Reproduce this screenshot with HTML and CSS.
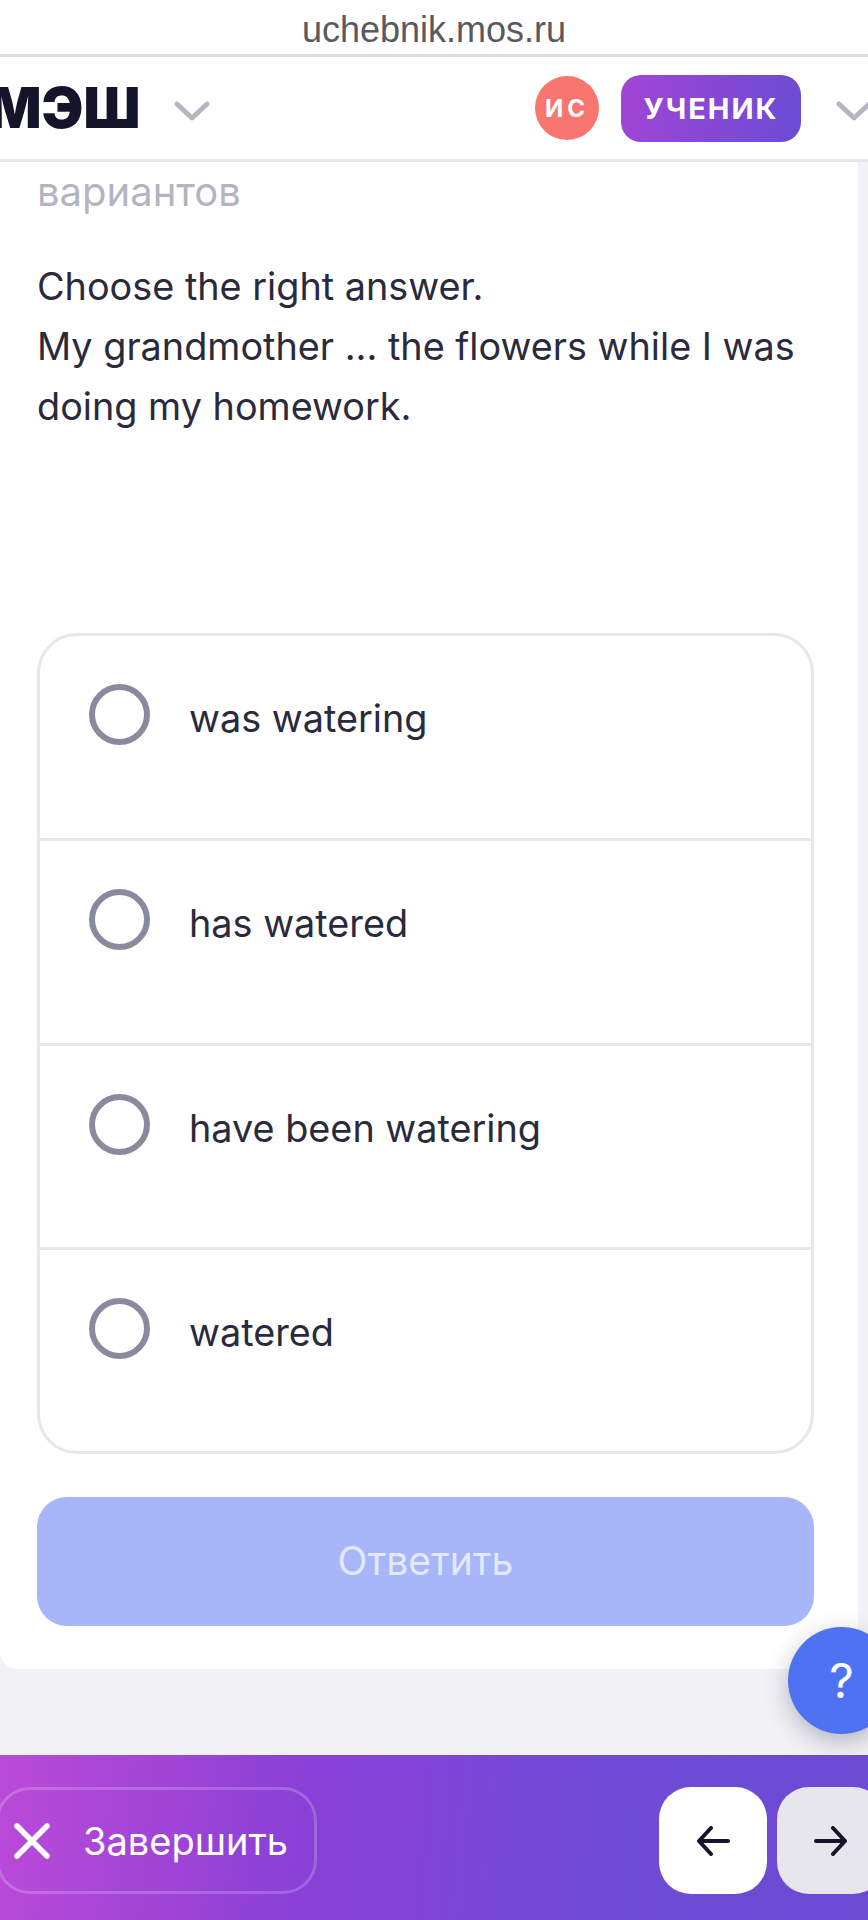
FILE: index.html
```html
<!DOCTYPE html>
<html lang="ru">
<head>
  <meta charset="UTF-8" />
  <meta name="viewport" content="width=device-width, initial-scale=1.0" />
  <title>МЭШ</title>
  <link rel="stylesheet" href="styles.css">
</head>
<body>
  <div class="urlbar">uchebnik.mos.ru</div>

  <header class="topbar">
    <span class="logo">МЭШ</span>
    <svg class="chevron chevron-logo" viewBox="0 0 36 20"><path d="M3 3 L18 17 L33 3" /></svg>
    <span class="avatar">ИС</span>
    <span class="role">УЧЕНИК</span>
    <svg class="chevron chevron-role" viewBox="0 0 36 20"><path d="M3 3 L18 17 L33 3" /></svg>
  </header>

  <main class="content">
    <section class="task">
      <p class="hint">вариантов</p>
      <p class="question">Choose the right answer.<br>My grandmother ... the flowers while I was doing my homework.</p>

      <div class="options">
        <label class="option"><span class="radio"></span><span class="option-text">was watering</span></label>
        <label class="option"><span class="radio"></span><span class="option-text">has watered</span></label>
        <label class="option"><span class="radio"></span><span class="option-text">have been watering</span></label>
        <label class="option"><span class="radio"></span><span class="option-text">watered</span></label>
      </div>

      <button class="submit">Ответить</button>
    </section>
    <button class="help">?</button>
  </main>

  <footer class="bottombar">
    <button class="finish">
      <svg class="finish-icon" viewBox="0 0 36 36"><path d="M3 3 L33 33 M33 3 L3 33" /></svg>
      Завершить
    </button>
    <button class="nav-btn nav-back">
      <svg viewBox="0 0 34 30"><path d="M32 15 H3 M15 2 L3 15 L15 28" /></svg>
    </button>
    <button class="nav-btn nav-next">
      <svg viewBox="0 0 34 30"><path d="M2 15 H31 M19 2 L31 15 L19 28" /></svg>
    </button>
  </footer>
</body>
</html>
```

FILE: styles.css
```css
* {
  box-sizing: border-box;
}

body {
  margin: 0;
  width: 868px;
  height: 1920px;
  display: flex;
  flex-direction: column;
  overflow: hidden;
  font-family: Inter, 'Noto Sans', sans-serif;
  background: #f2f2f6;
  color: #2a2a3c;
}

button {
  font-family: inherit;
  border: none;
}

.urlbar {
  height: 57px;
  padding-top: 9px;
  flex-shrink: 0;
  text-align: center;
  font-family: 'Liberation Sans', sans-serif;
  font-size: 36px;
  line-height: 42px;
  color: #59595e;
  background: #fff;
  border-bottom: 3px solid #dcdce0;
}

.topbar {
  height: 105px;
  flex-shrink: 0;
  display: flex;
  align-items: center;
  background: #fff;
  border-bottom: 3px solid #e6e6ec;
  position: relative;
  z-index: 2;
}

.logo {
  margin-left: -12px;
  width: 186px;
  font-size: 56px;
  font-weight: 900;
  color: #14142a;
  white-space: nowrap;
}

.chevron {
  width: 36px;
  height: 20px;
  margin-top: 6px;
  fill: none;
  stroke: #b6b6c2;
  stroke-width: 5;
  stroke-linecap: round;
  stroke-linejoin: round;
  flex-shrink: 0;
}

.avatar {
  width: 64px;
  height: 64px;
  margin-left: auto;
  border-radius: 50%;
  background: #f97570;
  color: #fff;
  font-size: 24px;
  font-weight: 700;
  letter-spacing: 4px;
  display: flex;
  align-items: center;
  justify-content: center;
}

.role {
  width: 180px;
  height: 67px;
  margin-left: 22px;
  border-radius: 20px;
  background: linear-gradient(100deg, #a244d6, #6a4cd4);
  color: #fff;
  font-size: 29px;
  font-weight: 700;
  letter-spacing: 2px;
  display: flex;
  align-items: center;
  justify-content: center;
}

.chevron-role {
  margin-left: 35px;
  margin-right: -4px;
}

.content {
  flex: 1;
  position: relative;
}

.task {
  width: 858px;
  height: 1507px;
  padding: 0 44px 0 37px;
  background: #fff;
  border-radius: 0 0 18px 18px;
}

.hint {
  margin: 0;
  padding-top: 7px;
  font-size: 40px;
  line-height: 46px;
  color: #b4b4c0;
}

.question {
  margin: 41px 0 0;
  font-size: 37.8px;
  line-height: 60px;
}

.options {
  margin-top: 197px;
  height: 821px;
  border: 3px solid #e6e6ec;
  border-radius: 40px;
}

.option {
  height: 204.75px;
  padding: 48px 0 0 49px;
  display: flex;
  align-items: flex-start;
  gap: 39px;
  font-size: 37.8px;
  line-height: 60px;
  border-bottom: 3px solid #e6e6ec;
}

.option:last-child {
  border-bottom: none;
}

.option-text {
  margin-top: 4px;
}

.radio {
  width: 61px;
  height: 61px;
  flex-shrink: 0;
  border: 6px solid #8a8a9e;
  border-radius: 50%;
}

.submit {
  display: block;
  width: 100%;
  height: 129px;
  margin-top: 43px;
  padding-bottom: 4px;
  border-radius: 30px;
  background: #a6b6f9;
  color: #e4e8fc;
  font-size: 39px;
}

.help {
  position: absolute;
  left: 788px;
  top: 1465px;
  width: 107px;
  height: 107px;
  padding: 0;
  border-radius: 50%;
  background: #4e72f2;
  color: #fff;
  font-size: 48px;
  box-shadow: 0 8px 24px rgba(40, 40, 70, 0.3);
}

.bottombar {
  height: 165px;
  padding-top: 6px;
  flex-shrink: 0;
  display: flex;
  align-items: center;
  background: linear-gradient(95deg, #bb4ad8, #8a40d6 35%, #6f4bd6 70%, #6c4ad2);
  position: relative;
}

.finish {
  width: 321px;
  height: 107px;
  margin-left: -4px;
  padding-left: 15px;
  display: flex;
  align-items: center;
  gap: 33px;
  border: 3px solid rgba(255, 255, 255, 0.2);
  border-radius: 34px;
  background: transparent;
  color: #fff;
  font-size: 38px;
}

.finish-icon {
  width: 36px;
  height: 36px;
  fill: none;
  stroke: #fff;
  stroke-width: 5.5;
  stroke-linecap: round;
}

.nav-btn {
  width: 108px;
  height: 107px;
  flex-shrink: 0;
  padding: 0;
  border-radius: 32px;
  display: flex;
  align-items: center;
  justify-content: center;
}

.nav-btn svg {
  width: 34px;
  height: 30px;
  fill: none;
  stroke: #14142a;
  stroke-width: 4;
  stroke-linecap: round;
  stroke-linejoin: round;
}

.nav-back {
  margin-left: auto;
  background: #fff;
}

.nav-next {
  margin-left: 10px;
  margin-right: -17px;
  background: #e6e6ec;
}
```
